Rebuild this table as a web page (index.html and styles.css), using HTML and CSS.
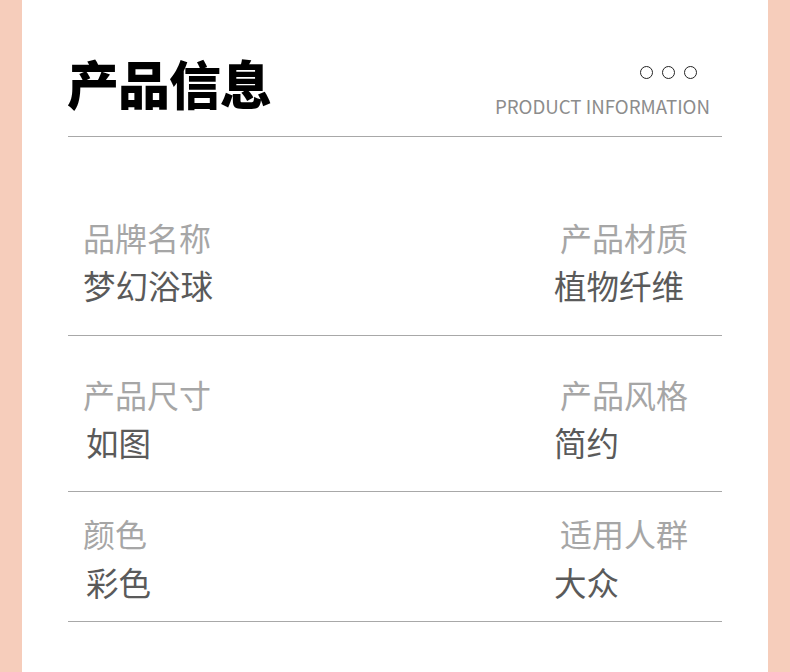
FILE: index.html
```html
<!DOCTYPE html>
<html lang="zh">
<head>
<meta charset="utf-8">
<link rel="stylesheet" href="styles.css">
</head>
<body>
<div class="page">
  <header class="head">
    <h1 class="title">产品信息</h1>
    <div class="head-right">
      <div class="dots"><span class="dot"></span><span class="dot"></span><span class="dot"></span></div>
      <div class="en">PRODUCT INFORMATION</div>
    </div>
  </header>
  <section class="row row1">
    <div class="cell left"><div class="label">品牌名称</div><div class="value">梦幻浴球</div></div>
    <div class="cell right"><div class="label">产品材质</div><div class="value">植物纤维</div></div>
  </section>
  <section class="row row2">
    <div class="cell left"><div class="label">产品尺寸</div><div class="value v-in">如图</div></div>
    <div class="cell right"><div class="label">产品风格</div><div class="value">简约</div></div>
  </section>
  <section class="row row3">
    <div class="cell left"><div class="label">颜色</div><div class="value v-in">彩色</div></div>
    <div class="cell right"><div class="label">适用人群</div><div class="value">大众</div></div>
  </section>
</div>
</body>
</html>
```
FILE: styles.css
```css
* { box-sizing: border-box; margin: 0; padding: 0; }
html, body { height: 100%; }
body {
  background: #f6cdbb;
  font-family: "Noto Sans CJK SC", "Noto Sans", sans-serif;
  overflow: hidden;
}
.page {
  background: #ffffff;
  margin: 0 22px;
  height: 672px;
  padding: 0 46px;
}
.head {
  display: flex;
  justify-content: space-between;
  align-items: flex-start;
  padding-top: 57px;
  height: 137px;
  border-bottom: 1px solid #a8a8a8;
}
.title {
  font-size: 52px;
  font-weight: 900;
  line-height: 1;
  color: #000;
  letter-spacing: -1px;
  margin-left: -1px;
}
.head-right {
  display: flex;
  flex-direction: column;
  align-items: flex-end;
  padding-right: 12px;
  padding-top: 9px;
}
.dots {
  display: flex;
  gap: 9px;
  margin-right: 13px;
}
.dot {
  width: 13px;
  height: 13px;
  border: 1.5px solid #222;
  border-radius: 50%;
}
.en {
  font-size: 18.7px;
  line-height: 1;
  color: #8c8c8c;
  margin-top: 18px;
}
.row {
  display: flex;
  border-bottom: 1px solid #a8a8a8;
}
.row1 { height: 199px; padding-top: 84px; }
.row2 { height: 156px; padding-top: 42px; }
.row3 { height: 130px; padding-top: 25px; }
.cell { display: flex; flex-direction: column; }
.left { width: 486px; padding-left: 15px; }
.label {
  font-size: 32px;
  line-height: 1;
  color: #a6a6a6;
}
.value {
  font-size: 32.5px;
  line-height: 1;
  color: #5a5a5a;
  margin-top: 16px;
}
.row3 .value { margin-top: 17px; }
.v-in { padding-left: 3px; }
.right .label { padding-left: 6px; }
```
